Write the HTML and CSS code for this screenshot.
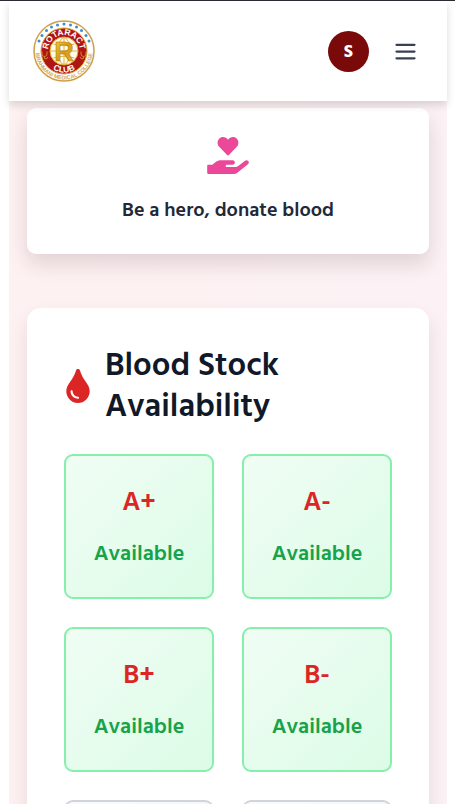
FILE: index.html
```html
<!DOCTYPE html>
<html lang="en">
<head>
    <meta charset="UTF-8">
    <meta name="viewport" content="width=device-width, initial-scale=1.0">
    <title>Rotaract Club - Blood Donation</title>
    <link rel="stylesheet" href="styles.css">
</head>
<body>
    <div class="page">

        <!-- Navbar -->
        <header class="navbar">
            <a href="#" class="logo-link" aria-label="Rotaract Club home">
                <svg class="logo" viewBox="0 0 124 124">
                    <defs>
                        <linearGradient id="gold" x1="0" y1="0" x2="1" y2="1">
                            <stop offset="0" stop-color="#f6d13a"/>
                            <stop offset="0.5" stop-color="#d99a12"/>
                            <stop offset="1" stop-color="#e8bc22"/>
                        </linearGradient>
                        <path id="arcTop" d="M30 62a32 32 0 0 1 64 0"/>
                        <path id="arcBottom" d="M19 62a43 43 0 0 0 86 0"/>
                        <path id="arcOuter" d="M5 54v8a57 57 0 0 0 114 0v-8"/>
                    </defs>
                    <circle cx="62" cy="62" r="60" fill="#fff" stroke="#cf9f45" stroke-width="3"/>
                    <circle cx="62" cy="62" r="46" fill="#b01515" stroke="#d6a53c" stroke-width="2"/>
                    <circle cx="62" cy="62" r="28" fill="#fffbe8" stroke="#dba92c" stroke-width="2"/>
                    <g fill="none" stroke="#dfb44c" stroke-width="2">
                        <ellipse cx="62" cy="62" rx="12" ry="27"/>
                        <path d="M35 62h54M62 35v54M41 48q21 7 42 0M41 76q21-7 42 0"/>
                    </g>
                    <g fill="#3d8ecb">
                        <circle cx="12" cy="42" r="3"/>
                        <circle cx="18" cy="31" r="3"/>
                        <circle cx="27" cy="21" r="3"/>
                        <circle cx="37" cy="14" r="3"/>
                        <circle cx="49" cy="10" r="3"/>
                        <circle cx="62" cy="8" r="3"/>
                        <circle cx="75" cy="10" r="3"/>
                        <circle cx="87" cy="14" r="3"/>
                        <circle cx="97" cy="21" r="3"/>
                        <circle cx="106" cy="31" r="3"/>
                        <circle cx="112" cy="42" r="3"/>
                    </g>
                    <g fill="none" stroke="#d08b2b" stroke-width="2">
                        <path d="M18 63v5q0 5 5 5t5-5v-5M23 73v4q5 3 7-3M96 63v5q0 5 5 5t5-5v-5M101 73v4q-5 3-7-3"/>
                    </g>
                    <text class="logo-name"><textPath href="#arcTop" startOffset="50%">ROTARACT</textPath></text>
                    <text class="logo-name"><textPath href="#arcBottom" startOffset="50%">CLUB</textPath></text>
                    <text class="logo-college"><textPath href="#arcOuter" startOffset="50%">BRAHMANI MEDICAL COLLEGE</textPath></text>
                    <text class="logo-letter" x="62" y="81" fill="url(#gold)">R</text>
                </svg>
            </a>
            <div class="nav-actions">
                <button class="avatar" type="button" aria-label="Profile">S</button>
                <button class="menu-button" type="button" aria-label="Open menu">
                    <svg viewBox="0 0 24 24"><path d="M4 6h16M4 12h16M4 18h16"/></svg>
                </button>
            </div>
        </header>

        <main class="content">
            <section class="hero-card">
                <svg class="hero-icon" viewBox="0 0 576 512">
                    <path d="M275.3 250.5c7 7.4 18.4 7.4 25.5 0l108.9-114.2c31.6-33.2 29.8-88.2-5.6-118.8-30.8-26.7-76.7-21.9-104.9 7.7L288 36.9l-11.1-11.6C248.7-4.4 202.8-9.2 172 17.5c-35.3 30.6-37.2 85.6-5.6 118.8l108.9 114.2zm290 77.6c-11.8-10.7-30.2-10-42.6 0L430.3 402c-11.3 9.1-25.4 14-40 14H272c-8.8 0-16-7.2-16-16s7.2-16 16-16h78.3c15.9 0 30.7-10.9 33.3-26.6 3.3-20-12.1-37.4-31.6-37.4H192c-27 0-53.1 9.3-74.1 26.3L71.4 384H16c-8.8 0-16 7.2-16 16v96c0 8.8 7.2 16 16 16h356.8c14.5 0 28.6-4.9 40-14L564 377c15.2-12.1 16.4-35.3 1.3-48.9z"/>
                </svg>
                <p>Be a hero, donate blood</p>
            </section>

            <!-- Blood stock -->
            <section class="stock-section">
                <div class="stock-header">
                    <svg class="drop-icon" viewBox="0 0 352 512">
                        <path d="M205.22 22.09c-7.94-28.78-49.44-30.12-58.44 0C100.01 179.85 0 222.72 0 333.91 0 432.35 78.72 512 176 512s176-79.65 176-178.09c0-111.75-99.79-153.34-146.78-311.82zM176 448c-61.75 0-112-50.25-112-112 0-8.84 7.16-16 16-16s16 7.16 16 16c0 44.11 35.89 80 80 80 8.84 0 16 7.16 16 16s-7.16 16-16 16z"/>
                    </svg>
                    <h2>Blood Stock Availability</h2>
                </div>
                <div class="stock-grid">
                    <div class="stock-card">
                        <h3>A+</h3>
                        <p>Available</p>
                    </div>
                    <div class="stock-card">
                        <h3>A-</h3>
                        <p>Available</p>
                    </div>
                    <div class="stock-card">
                        <h3>B+</h3>
                        <p>Available</p>
                    </div>
                    <div class="stock-card">
                        <h3>B-</h3>
                        <p>Available</p>
                    </div>
                    <div class="stock-card empty"></div>
                    <div class="stock-card empty"></div>
                </div>
            </section>
        </main>
    </div>
</body>
</html>
```
FILE: styles.css
```css
* {
    box-sizing: border-box;
    margin: 0;
    padding: 0;
}
body {
    font-family: "Hind Siliguri", Roboto, sans-serif;
    background-color: #fff;
    color: #1f2937;
}
button {
    border: none;
    background: none;
    font-family: inherit;
    cursor: pointer;
}
.page {
    height: 100vh;
    overflow: hidden;
    border-top: 1px solid #2b2a33;
    padding: 0 8px 0 9px;
}

/* Navbar */
.navbar {
    position: relative;
    z-index: 10;
    display: flex;
    justify-content: space-between;
    align-items: center;
    height: 100px;
    padding: 0 28px 0 24px;
    background-color: #fff;
    box-shadow: 0 4px 8px rgba(0, 0, 0, 0.14);
}
.logo-link,
.menu-button {
    display: flex;
}
.logo {
    width: 62px;
    height: 62px;
}
.logo-name {
    font: bold 17px "Liberation Sans", sans-serif;
    fill: #fff;
    text-anchor: middle;
}
.logo-college {
    font: bold 11px "Liberation Sans", sans-serif;
    fill: #d3a85a;
    text-anchor: middle;
}
.logo-letter {
    font: bold 54px "Liberation Sans", sans-serif;
    stroke: #a87413;
    stroke-width: 1;
    text-anchor: middle;
}
.nav-actions {
    display: flex;
    align-items: center;
    gap: 23px;
}
.avatar {
    width: 41px;
    height: 41px;
    border-radius: 50%;
    background-color: #7a0a0a;
    color: #fff;
    font-size: 18px;
    font-weight: 700;
}
.menu-button svg {
    width: 27px;
    height: 27px;
    fill: none;
    stroke: #374151;
    stroke-width: 2;
    stroke-linecap: round;
}

/* Content */
.content {
    padding: 7px 18px 0;
    background: linear-gradient(to right, #fef1f1, #fcf1f5);
}
.hero-card {
    display: flex;
    flex-direction: column;
    align-items: center;
    gap: 22px;
    padding: 29px 28px 30px;
    margin-bottom: 54px;
    background-color: #fff;
    border-radius: 9px;
    box-shadow: 0 10px 20px rgba(60, 20, 30, 0.14);
}
.hero-icon {
    width: 42px;
    height: 37px;
    fill: #ec4899;
}
.hero-card p {
    font-size: 20px;
    font-weight: 600;
    line-height: 28px;
}

/* Blood stock */
.stock-section {
    padding: 37px;
    background-color: #fff;
    border-radius: 14px;
    box-shadow: 0 10px 20px rgba(60, 20, 30, 0.1);
}
.stock-header {
    display: flex;
    align-items: center;
    gap: 15px;
    padding-left: 2px;
    margin-bottom: 27px;
}
.drop-icon {
    flex-shrink: 0;
    width: 24px;
    height: 34px;
    fill: #dc2626;
}
.stock-header h2 {
    font-size: 33px;
    font-weight: 600;
    line-height: 41px;
    color: #111827;
}
.stock-grid {
    display: grid;
    grid-template-columns: 1fr 1fr;
    gap: 28px;
}
.stock-card {
    display: flex;
    flex-direction: column;
    align-items: center;
    gap: 17px;
    min-height: 145px;
    padding: 28px 0 24px;
    border: 2px solid #86efac;
    border-radius: 9px;
    background: linear-gradient(to bottom right, #f0fdf4, #dcfce7);
}
.stock-card h3 {
    font-size: 27px;
    font-weight: 600;
    line-height: 36px;
    color: #dc2626;
}
.stock-card p {
    font-size: 22px;
    font-weight: 600;
    line-height: 32px;
    color: #16a34a;
}
.stock-card.empty {
    border-color: #d1d5db;
    background: linear-gradient(to bottom right, #f9fafb, #f3f4f6);
}
```
